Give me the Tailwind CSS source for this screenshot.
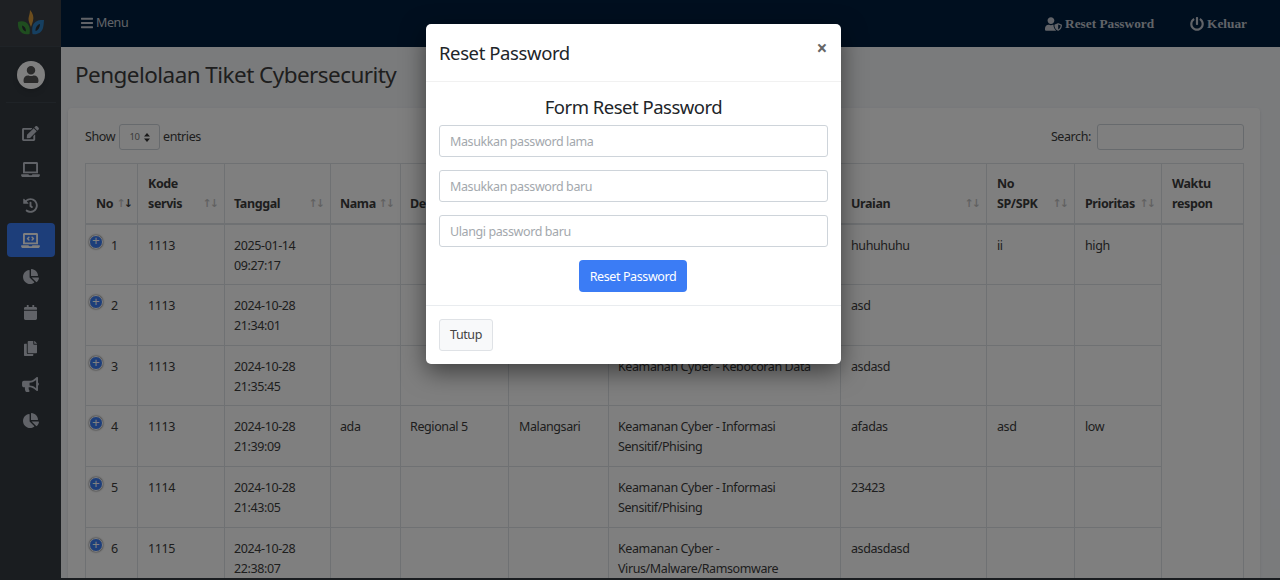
<!DOCTYPE html>
<html lang="id">
<head>
<meta charset="utf-8">
<title>Pengelolaan Tiket Cybersecurity</title>
<script src="https://cdn.jsdelivr.net/npm/@tailwindcss/browser@4"></script>
</head>
<body class="h-[580px] overflow-hidden font-['Noto_Sans',sans-serif] text-[12.5px] tracking-[-0.4px] text-[#3d3d3d]">
<div class="relative flex h-[580px] overflow-hidden">
  <aside class="flex w-[61px] shrink-0 flex-col items-center bg-[#343a40] text-[#c2c7d0]">
    <div class="flex h-[47px] w-full items-center justify-center border-b border-[#3f474e] bg-[#3c4146]">
      <svg class="h-[28px] w-[28px]" viewBox="0 0 28 28"><path d="M13 1c3 3 4 7 3 11-.5 2-1.500 4-2 6-1-3-2.500-5-2.500-8 0-3 1.500-5 1.500-9z" fill="#d99a3a"/><path d="M1 13c4-1.500 9-.5 11 4 1 2.500 1 5 .5 8-4.500 1-9-.5-10.500-5C1 18 .8 15.500 1 13z" fill="#3f9a3f"/><path d="M27 11c-4-.5-9 .5-11 5-1 2.500-1 6-.5 9 4.500 1 9-1 10.500-6 .6-2 .8-5 1-8z" fill="#2c7fc0"/><path d="M5 16.500c2.500 .5 4 3 4 6-2.500-.5-4-3-4-6zM23 15c-2.500 .5-4.500 3-4.500 7 2.500-.5 4.500-3.500 4.500-7z" fill="#2a2f33"/></svg>
    </div>
    <div class="flex h-[56px] w-[50px] items-center justify-center border-b border-[#3f474e]">
      <div class="flex h-[28px] w-[28px] items-center justify-center rounded-full bg-white shadow-md">
        <svg class="h-[17px] w-[16px] fill-[#555]" viewBox="0 0 448 512"><path d="M224 256c70.700 0 128-57.300 128-128S294.700 0 224 0 96 57.300 96 128s57.300 128 128 128zm89.600 32h-16.700c-22.200 10.200-46.900 16-72.900 16s-50.600-5.800-72.900-16h-16.700C60.200 288 0 348.200 0 422.400V464c0 26.500 21.500 48 48 48h352c26.500 0 48-21.500 48-48v-41.600c0-74.200-60.200-134.400-134.400-134.400z"/></svg>
      </div>
    </div>
    <nav class="mt-[12px] flex w-[48px] flex-col items-center">
      <div class="flex h-[36px] w-full items-center justify-center"><svg class="h-[15px] w-[17px] fill-current" viewBox="0 0 576 512"><path d="M402.600 83.200l90.200 90.200c3.800 3.800 3.800 10 0 13.800L274.400 405.600l-92.800 10.300c-12.400 1.400-22.900-9.100-21.500-21.500l10.300-92.800L388.800 83.200c3.800-3.800 10-3.800 13.800 0zm162-22.900l-48.800-48.800c-15.200-15.200-39.900-15.200-55.200 0l-35.400 35.400c-3.800 3.800-3.800 10 0 13.800l90.200 90.200c3.800 3.800 10 3.800 13.800 0l35.400-35.400c15.200-15.300 15.200-40 0-55.200zM384 346.200V448H64V128h229.800c3.200 0 6.200-1.300 8.500-3.500l40-40c7.600-7.600 2.200-20.500-8.500-20.500H48C21.500 64 0 85.500 0 112v352c0 26.500 21.500 48 48 48h352c26.500 0 48-21.500 48-48V306.200c0-10.700-12.900-16-20.500-8.500l-40 40c-2.200 2.300-3.500 5.300-3.500 8.500z"/></svg></div>
      <div class="flex h-[36px] w-full items-center justify-center"><svg class="h-[15px] w-[19px] fill-current" viewBox="0 0 640 512"><path d="M624 416H381.540c-.74 19.810-14.710 32-32.740 32H288c-18.690 0-33.020-17.470-32.770-32H16c-8.800 0-16 7.200-16 16v16c0 35.200 28.800 64 64 64h512c35.200 0 64-28.800 64-64v-16c0-8.800-7.200-16-16-16zM576 48c0-26.400-21.600-48-48-48H112C85.600 0 64 21.600 64 48v336h512V48zm-64 272H128V64h384v256z"/></svg></div>
      <div class="flex h-[36px] w-full items-center justify-center"><svg class="h-[15px] w-[15px] fill-current" viewBox="0 0 512 512"><path d="M504 255.531c.253 136.640-111.180 248.372-247.820 248.468-59.015.042-113.223-20.530-155.822-54.911-11.077-8.940-11.905-25.541-1.839-35.607l11.267-11.267c8.609-8.609 22.353-9.551 31.891-1.984C173.062 425.135 212.781 440 256 440c101.705 0 184-82.311 184-184 0-101.705-82.311-184-184-184-48.814 0-93.149 18.969-126.068 49.932l50.754 50.754c10.080 10.080 2.941 27.314-11.313 27.314H24c-8.837 0-16-7.163-16-16V38.627c0-14.254 17.234-21.393 27.314-11.314l49.372 49.372C129.209 34.136 189.552 8 256 8c136.810 0 247.747 110.780 248 247.531zm-180.912 78.784l9.823-12.630c8.138-10.463 6.253-25.542-4.210-33.679L288 256.349V152c0-13.255-10.745-24-24-24h-16c-13.255 0-24 10.745-24 24v135.651l65.409 50.874c10.463 8.137 25.541 6.253 33.679-4.210z"/></svg></div>
      <div class="flex h-[34px] w-full items-center justify-center rounded bg-[#3b7cf5] text-white"><svg class="h-[15px] w-[19px] fill-current" viewBox="0 0 640 512"><path d="M255.030 261.650c6.250 6.250 16.380 6.250 22.630 0l11.310-11.310c6.250-6.250 6.250-16.380 0-22.630L253.250 192l35.710-35.720c6.250-6.250 6.250-16.380 0-22.630l-11.310-11.310c-6.250-6.250-16.380-6.250-22.630 0l-58.340 58.340c-6.250 6.250-6.250 16.380 0 22.630l58.350 58.340zm96.010-11.300l11.310 11.310c6.250 6.250 16.380 6.250 22.630 0l58.340-58.340c6.250-6.250 6.250-16.380 0-22.630l-58.340-58.340c-6.250-6.250-16.380-6.250-22.630 0l-11.310 11.310c-6.250 6.250-6.250 16.380 0 22.630L386.750 192l-35.710 35.720c-6.250 6.250-6.250 16.380 0 22.630zM624 416H381.540c-.74 19.810-14.710 32-32.740 32H288c-18.690 0-33.020-17.470-32.770-32H16c-8.800 0-16 7.200-16 16v16c0 35.200 28.800 64 64 64h512c35.200 0 64-28.800 64-64v-16c0-8.800-7.200-16-16-16zM576 48c0-26.400-21.600-48-48-48H112C85.600 0 64 21.600 64 48v336h512V48zm-64 272H128V64h384v256z"/></svg></div>
      <div class="mt-[1px] flex h-[36px] w-full items-center justify-center"><svg class="h-[15px] w-[16px] fill-current" viewBox="0 0 544 512"><path d="M527.790 288H290.500l158.030 158.030c6.040 6.040 15.980 6.530 22.190.68 38.700-36.460 65.320-85.610 73.130-140.860 1.340-9.460-6.510-17.850-16.060-17.850zm-15.830-64.800C503.720 103.740 408.260 8.280 288.800.04 279.680-.59 272 7.100 272 16.240V240h223.770c9.140 0 16.820-7.680 16.190-16.800zM224 288V50.710c0-9.550-8.390-17.400-17.840-16.060C86.990 51.490-4.100 155.600.14 280.370 4.500 408.510 114.830 513.590 243.030 511.980c50.400-.63 96.970-16.870 135.260-44.030 7.900-5.600 8.420-17.230 1.570-24.080L224 288z"/></svg></div>
      <div class="flex h-[36px] w-full items-center justify-center"><svg class="h-[15px] w-[13px] fill-current" viewBox="0 0 448 512"><path d="M12 192h424c6.600 0 12 5.400 12 12v260c0 26.500-21.500 48-48 48H48c-26.500 0-48-21.500-48-48V204c0-6.600 5.400-12 12-12zm436-44v-36c0-26.500-21.500-48-48-48h-48V12c0-6.600-5.400-12-12-12h-40c-6.600 0-12 5.400-12 12v52H160V12c0-6.600-5.400-12-12-12h-40c-6.600 0-12 5.400-12 12v52H48C21.500 64 0 85.500 0 112v36c0 6.600 5.400 12 12 12h424c6.600 0 12-5.400 12-12z"/></svg></div>
      <div class="flex h-[36px] w-full items-center justify-center"><svg class="h-[15px] w-[13px] fill-current" viewBox="0 0 448 512"><path d="M320 448v40c0 13.255-10.745 24-24 24H24c-13.255 0-24-10.745-24-24V120c0-13.255 10.745-24 24-24h72v296c0 30.879 25.121 56 56 56h168zm0-344V0H152c-13.255 0-24 10.745-24 24v368c0 13.255 10.745 24 24 24h272c13.255 0 24-10.745 24-24V128H344c-13.200 0-24-10.800-24-24zm120.971-31.029L375.029 7.029A24 24 0 0 0 358.059 0H352v96h96v-6.059a24 24 0 0 0-7.029-16.970z"/></svg></div>
      <div class="flex h-[36px] w-full items-center justify-center"><svg class="h-[15px] w-[17px] fill-current" viewBox="0 0 576 512"><path d="M576 240c0-23.630-12.950-44.040-32-55.120V32.010C544 23.260 537.020 0 512 0c-7.120 0-14.190 2.380-19.980 7.020l-85.030 68.030C364.280 109.190 310.660 128 256 128H64c-35.350 0-64 28.650-64 64v96c0 35.350 28.650 64 64 64h33.700c-1.390 10.480-2.180 21.140-2.180 32 0 39.770 9.260 77.350 25.560 110.940 5.190 10.690 16.520 17.060 28.400 17.060h74.280c26.050 0 41.690-29.840 25.900-50.560-16.400-21.520-26.150-48.360-26.150-77.440 0-11.110 1.620-21.790 4.410-32H256c54.660 0 108.280 18.810 150.980 52.950l85.030 68.030a32.023 32.023 0 0 0 19.980 7.020c24.920 0 32-22.780 32-32V295.130C563.050 284.040 576 263.630 576 240zm-96 141.420l-33.050-26.440C392.950 311.780 325.120 288 256 288v-96c69.120 0 136.950-23.780 190.950-66.980L480 98.580v282.840z"/></svg></div>
      <div class="flex h-[36px] w-full items-center justify-center"><svg class="h-[15px] w-[16px] fill-current" viewBox="0 0 544 512"><path d="M527.790 288H290.500l158.030 158.030c6.040 6.040 15.980 6.530 22.190.68 38.700-36.460 65.320-85.610 73.130-140.860 1.340-9.460-6.510-17.850-16.060-17.850zm-15.830-64.800C503.720 103.740 408.260 8.280 288.800.04 279.680-.59 272 7.100 272 16.240V240h223.770c9.140 0 16.820-7.680 16.190-16.800zM224 288V50.710c0-9.550-8.390-17.400-17.840-16.060C86.990 51.490-4.100 155.600.14 280.370 4.500 408.510 114.830 513.590 243.030 511.980c50.400-.63 96.970-16.870 135.260-44.030 7.900-5.600 8.420-17.230 1.570-24.080L224 288z"/></svg></div>
    </nav>
  </aside>

  <div class="flex min-w-0 flex-1 flex-col">
    <header class="flex h-[47px] shrink-0 items-center bg-[#001f3f] pl-[20px] text-[#c2c7d0]">
      <div class="-mt-[1px] flex items-center gap-[3px]">
        <svg class="h-[14px] w-[12px] fill-current" viewBox="0 0 448 512"><path d="M16 132h416c8.837 0 16-7.163 16-16V76c0-8.837-7.163-16-16-16H16C7.163 60 0 67.163 0 76v40c0 8.837 7.163 16 16 16zm0 160h416c8.837 0 16-7.163 16-16v-40c0-8.837-7.163-16-16-16H16c-8.837 0-16 7.163-16 16v40c0 8.837 7.163 16 16 16zm0 160h416c8.837 0 16-7.163 16-16v-40c0-8.837-7.163-16-16-16H16c-8.837 0-16 7.163-16 16v40c0 8.837 7.163 16 16 16z"/></svg>
        <span>Menu</span>
      </div>
      <div class="ml-auto flex items-center font-['Liberation_Serif',serif] text-[13.3px] font-bold tracking-normal">
        <div class="flex items-center gap-[3px]">
          <svg class="h-[14px] w-[17px] fill-current" viewBox="0 0 640 512"><path d="M622.300 271.100l-115.200-45c-4.100-1.600-12.600-3.700-22.200 0l-115.200 45c-10.700 4.200-17.700 14-17.700 24.900 0 111.600 68.700 188.800 132.900 213.900 9.600 3.700 18 1.600 22.200 0C558.400 489.900 640 420.500 640 296c0-10.900-7-20.700-17.700-24.900zM496 462.400V273.300l95.500 37.300c-5.600 87.100-60.900 135.400-95.500 151.800zM224 256c70.700 0 128-57.300 128-128S294.700 0 224 0 96 57.300 96 128s57.300 128 128 128zm96 40c0-2.500.8-4.800 1.100-7.200-2.500-.1-4.900-.8-7.500-.8h-16.700c-22.200 10.200-46.900 16-72.900 16s-50.600-5.800-72.900-16h-16.700C60.200 288 0 348.200 0 422.400V464c0 26.500 21.500 48 48 48h352c6.800 0 13.300-1.500 19.200-4-54-42.900-99.200-116.700-99.200-212z"/></svg>
          <span>Reset Password</span>
        </div>
        <div class="ml-[36px] mr-[33px] flex items-center gap-[3px]">
          <svg class="h-[14px] w-[14px] fill-current" viewBox="0 0 512 512"><path d="M400 54.100c63 45 104 118.600 104 201.900 0 136.800-110.800 247.700-247.500 248C120 504.300 8.200 393 8 256.400 7.900 173.100 48.900 99.300 111.800 54.200c11.700-8.300 28-4.800 35 7.700L162.600 90c5.900 10.500 3.100 23.800-6.600 31-41.500 30.800-68 79.600-68 134.900-.1 92.300 74.500 168.100 168 168.100 91.600 0 168.600-74.200 168-169.100-.3-51.800-24.700-101.800-68.100-134-9.700-7.200-12.400-20.500-6.500-30.900l15.800-28.100c7-12.400 23.200-16.100 34.800-7.900zM296 264V24c0-13.300-10.700-24-24-24h-32c-13.300 0-24 10.700-24 24v240c0 13.300 10.700 24 24 24h32c13.300 0 24-10.700 24-24z"/></svg>
          <span>Keluar</span>
        </div>
      </div>
    </header>

    <main class="min-h-0 flex-1 overflow-hidden bg-[#f4f6f9] pl-[7px] pr-[20px]">
      <h1 class="ml-[7px] flex h-[61px] items-center pb-[6px] text-[22.5px] tracking-[-0.55px] text-[#3d3d3d]">Pengelolaan Tiket Cybersecurity</h1>
      <section class="rounded-t-[4px] bg-white pl-[17px] pr-[16px] pt-[16px] shadow-sm">
        <div class="flex h-[39px] items-start justify-between">
          <div class="flex items-center">
            <span class="w-[34px]">Show</span>
            <div class="flex h-[26px] w-[41px] items-center justify-center gap-[4px] rounded-[3px] border border-[#ced4da] text-[9.5px] text-[#777]">
              <span>10</span>
              <svg class="h-[9px] w-[6px] fill-[#333]" viewBox="0 0 6 9"><path d="M3 0l3 3.500H0zM3 9L0 5.500h6z"/></svg>
            </div>
            <span class="ml-[3px]">entries</span>
          </div>
          <div class="flex items-center gap-[6px]">
            <span>Search:</span>
            <div class="h-[26px] w-[147px] rounded-[3px] border border-[#ced4da]"></div>
          </div>
        </div>
        <table class="w-[1158px] table-fixed border-collapse border border-[#dee2e6] text-left leading-[20px]">
          <colgroup>
            <col class="w-[52px]"><col class="w-[87px]"><col class="w-[106px]"><col class="w-[70px]"><col class="w-[108px]"><col class="w-[100px]"><col class="w-[232px]"><col class="w-[146px]"><col class="w-[88px]"><col class="w-[87px]"><col class="w-[82px]">
          </colgroup>
          <thead class="font-bold">
            <tr class="h-[60px] border-b-2 border-[#dee2e6] align-bottom">
              <th class="border-r border-[#dee2e6] pb-[9px] pl-[10px] pr-[6px]"><div class="flex items-center justify-between"><span>No</span><span class="self-end font-['DejaVu_Sans',sans-serif] text-[11px] tracking-[-2px]"><span class="opacity-30">↑</span>↓</span></div></th>
              <th class="border-r border-[#dee2e6] pb-[9px] pl-[10px] pr-[7px]"><div class="flex items-end justify-between"><span>Kode<br>servis</span><span class="font-['DejaVu_Sans',sans-serif] text-[11px] tracking-[-2px] opacity-30">↑↓</span></div></th>
              <th class="border-r border-[#dee2e6] pb-[9px] pl-[9px] pr-[7px]"><div class="flex items-end justify-between"><span>Tanggal</span><span class="font-['DejaVu_Sans',sans-serif] text-[11px] tracking-[-2px] opacity-30">↑↓</span></div></th>
              <th class="border-r border-[#dee2e6] pb-[9px] pl-[9px] pr-[7px]"><div class="flex items-end justify-between"><span>Nama</span><span class="font-['DejaVu_Sans',sans-serif] text-[11px] tracking-[-2px] opacity-30">↑↓</span></div></th>
              <th class="border-r border-[#dee2e6] pb-[9px] pl-[9px] pr-[7px]"><span>Departemen</span></th>
              <th class="border-r border-[#dee2e6]"></th>
              <th class="border-r border-[#dee2e6]"></th>
              <th class="border-r border-[#dee2e6] pb-[9px] pl-[10px] pr-[7px]"><div class="flex items-end justify-between"><span>Uraian</span><span class="font-['DejaVu_Sans',sans-serif] text-[11px] tracking-[-2px] opacity-30">↑↓</span></div></th>
              <th class="border-r border-[#dee2e6] pb-[9px] pl-[10px] pr-[7px]"><div class="flex items-end justify-between"><span>No<br>SP/SPK</span><span class="font-['DejaVu_Sans',sans-serif] text-[11px] tracking-[-2px] opacity-30">↑↓</span></div></th>
              <th class="border-r border-[#dee2e6] pb-[9px] pl-[10px] pr-[7px]"><div class="flex items-end justify-between"><span>Prioritas</span><span class="font-['DejaVu_Sans',sans-serif] text-[11px] tracking-[-2px] opacity-30">↑↓</span></div></th>
              <th class="pb-[9px] pl-[10px] pr-[6px]"><span>Waktu<br>respon</span></th>
            </tr>
          </thead>
          <tbody class="align-top">
            <tr class="h-[61px] border-b border-[#dee2e6]">
              <td class="border-r border-[#dee2e6] pl-[3px] pt-[11px]"><div class="flex gap-[8px]"><span class="-mt-[1px] box-content flex h-[12px] w-[12px] items-center justify-center rounded-full border-[1.5px] border-white bg-[#3b7cf5] font-['Liberation_Mono',monospace] text-[13px] leading-none tracking-normal text-white shadow-[0_0_2px_#444]">+</span><span>1</span></div></td>
              <td class="border-r border-[#dee2e6] pl-[10px] pt-[11px]">1113</td>
              <td class="border-r border-[#dee2e6] pl-[9px] pt-[11px]">2025-01-14<br>09:27:17</td>
              <td class="border-r border-[#dee2e6] pl-[9px] pt-[11px]"></td>
              <td class="border-r border-[#dee2e6] pl-[9px] pt-[11px]"></td>
              <td class="border-r border-[#dee2e6] pl-[9px] pt-[11px]"></td>
              <td class="border-r border-[#dee2e6] pl-[9px] pt-[11px]"></td>
              <td class="border-r border-[#dee2e6] pl-[10px] pt-[11px]">huhuhuhu</td>
              <td class="border-r border-[#dee2e6] pl-[10px] pt-[11px]">ii</td>
              <td class="border-r border-[#dee2e6] pl-[10px] pt-[11px]">high</td>
              <td rowspan="6"></td>
            </tr>
            <tr class="h-[61px] border-b border-[#dee2e6]">
              <td class="border-r border-[#dee2e6] pl-[3px] pt-[11px]"><div class="flex gap-[8px]"><span class="-mt-[1px] box-content flex h-[12px] w-[12px] items-center justify-center rounded-full border-[1.5px] border-white bg-[#3b7cf5] font-['Liberation_Mono',monospace] text-[13px] leading-none tracking-normal text-white shadow-[0_0_2px_#444]">+</span><span>2</span></div></td>
              <td class="border-r border-[#dee2e6] pl-[10px] pt-[11px]">1113</td>
              <td class="border-r border-[#dee2e6] pl-[9px] pt-[11px]">2024-10-28<br>21:34:01</td>
              <td class="border-r border-[#dee2e6] pl-[9px] pt-[11px]"></td>
              <td class="border-r border-[#dee2e6] pl-[9px] pt-[11px]"></td>
              <td class="border-r border-[#dee2e6] pl-[9px] pt-[11px]"></td>
              <td class="border-r border-[#dee2e6] pl-[9px] pt-[11px]"></td>
              <td class="border-r border-[#dee2e6] pl-[10px] pt-[11px]">asd</td>
              <td class="border-r border-[#dee2e6] pl-[10px] pt-[11px]"></td>
              <td class="border-r border-[#dee2e6] pl-[10px] pt-[11px]"></td>
            </tr>
            <tr class="h-[60px] border-b border-[#dee2e6]">
              <td class="border-r border-[#dee2e6] pl-[3px] pt-[11px]"><div class="flex gap-[8px]"><span class="-mt-[1px] box-content flex h-[12px] w-[12px] items-center justify-center rounded-full border-[1.5px] border-white bg-[#3b7cf5] font-['Liberation_Mono',monospace] text-[13px] leading-none tracking-normal text-white shadow-[0_0_2px_#444]">+</span><span>3</span></div></td>
              <td class="border-r border-[#dee2e6] pl-[10px] pt-[11px]">1113</td>
              <td class="border-r border-[#dee2e6] pl-[9px] pt-[11px]">2024-10-28<br>21:35:45</td>
              <td class="border-r border-[#dee2e6] pl-[9px] pt-[11px]"></td>
              <td class="border-r border-[#dee2e6] pl-[9px] pt-[11px]"></td>
              <td class="border-r border-[#dee2e6] pl-[9px] pt-[11px]"></td>
              <td class="border-r border-[#dee2e6] pl-[9px] pt-[11px]">Keamanan Cyber - Kebocoran Data</td>
              <td class="border-r border-[#dee2e6] pl-[10px] pt-[11px]">asdasd</td>
              <td class="border-r border-[#dee2e6] pl-[10px] pt-[11px]"></td>
              <td class="border-r border-[#dee2e6] pl-[10px] pt-[11px]"></td>
            </tr>
            <tr class="h-[61px] border-b border-[#dee2e6]">
              <td class="border-r border-[#dee2e6] pl-[3px] pt-[11px]"><div class="flex gap-[8px]"><span class="-mt-[1px] box-content flex h-[12px] w-[12px] items-center justify-center rounded-full border-[1.5px] border-white bg-[#3b7cf5] font-['Liberation_Mono',monospace] text-[13px] leading-none tracking-normal text-white shadow-[0_0_2px_#444]">+</span><span>4</span></div></td>
              <td class="border-r border-[#dee2e6] pl-[10px] pt-[11px]">1113</td>
              <td class="border-r border-[#dee2e6] pl-[9px] pt-[11px]">2024-10-28<br>21:39:09</td>
              <td class="border-r border-[#dee2e6] pl-[9px] pt-[11px]">ada</td>
              <td class="border-r border-[#dee2e6] pl-[9px] pt-[11px]">Regional 5</td>
              <td class="border-r border-[#dee2e6] pl-[10px] pt-[11px]">Malangsari</td>
              <td class="border-r border-[#dee2e6] pl-[9px] pt-[11px]">Keamanan Cyber - Informasi<br>Sensitif/Phising</td>
              <td class="border-r border-[#dee2e6] pl-[10px] pt-[11px]">afadas</td>
              <td class="border-r border-[#dee2e6] pl-[10px] pt-[11px]">asd</td>
              <td class="border-r border-[#dee2e6] pl-[10px] pt-[11px]">low</td>
            </tr>
            <tr class="h-[61px] border-b border-[#dee2e6]">
              <td class="border-r border-[#dee2e6] pl-[3px] pt-[11px]"><div class="flex gap-[8px]"><span class="-mt-[1px] box-content flex h-[12px] w-[12px] items-center justify-center rounded-full border-[1.5px] border-white bg-[#3b7cf5] font-['Liberation_Mono',monospace] text-[13px] leading-none tracking-normal text-white shadow-[0_0_2px_#444]">+</span><span>5</span></div></td>
              <td class="border-r border-[#dee2e6] pl-[10px] pt-[11px]">1114</td>
              <td class="border-r border-[#dee2e6] pl-[9px] pt-[11px]">2024-10-28<br>21:43:05</td>
              <td class="border-r border-[#dee2e6] pl-[9px] pt-[11px]"></td>
              <td class="border-r border-[#dee2e6] pl-[9px] pt-[11px]"></td>
              <td class="border-r border-[#dee2e6] pl-[9px] pt-[11px]"></td>
              <td class="border-r border-[#dee2e6] pl-[9px] pt-[11px]">Keamanan Cyber - Informasi<br>Sensitif/Phising</td>
              <td class="border-r border-[#dee2e6] pl-[10px] pt-[11px]">23423</td>
              <td class="border-r border-[#dee2e6] pl-[10px] pt-[11px]"></td>
              <td class="border-r border-[#dee2e6] pl-[10px] pt-[11px]"></td>
            </tr>
            <tr class="h-[61px] border-b border-[#dee2e6]">
              <td class="border-r border-[#dee2e6] pl-[3px] pt-[11px]"><div class="flex gap-[8px]"><span class="-mt-[1px] box-content flex h-[12px] w-[12px] items-center justify-center rounded-full border-[1.5px] border-white bg-[#3b7cf5] font-['Liberation_Mono',monospace] text-[13px] leading-none tracking-normal text-white shadow-[0_0_2px_#444]">+</span><span>6</span></div></td>
              <td class="border-r border-[#dee2e6] pl-[10px] pt-[11px]">1115</td>
              <td class="border-r border-[#dee2e6] pl-[9px] pt-[11px]">2024-10-28<br>22:38:07</td>
              <td class="border-r border-[#dee2e6] pl-[9px] pt-[11px]"></td>
              <td class="border-r border-[#dee2e6] pl-[9px] pt-[11px]"></td>
              <td class="border-r border-[#dee2e6] pl-[9px] pt-[11px]"></td>
              <td class="border-r border-[#dee2e6] pl-[9px] pt-[11px]">Keamanan Cyber -<br>Virus/Malware/Ramsomware</td>
              <td class="border-r border-[#dee2e6] pl-[10px] pt-[11px]">asdasdasd</td>
              <td class="border-r border-[#dee2e6] pl-[10px] pt-[11px]"></td>
              <td class="border-r border-[#dee2e6] pl-[10px] pt-[11px]"></td>
            </tr>
          </tbody>
        </table>
      </section>
    </main>
    <div class="h-[2px] shrink-0 bg-[#343a40]"></div>
  </div>

  <div class="absolute inset-0 bg-black/50"></div>

  <div class="absolute left-[426px] top-[24px] flex h-[340px] w-[415px] flex-col rounded-[5px] bg-white text-[#212529] shadow-[0_8px_24px_rgba(0,0,0,0.5)]">
    <div class="flex h-[58px] shrink-0 items-center justify-between border-b border-[#f1f1f1] pl-[13px] pr-[14px]">
      <h2 class="text-[18.5px] tracking-[-0.4px]">Reset Password</h2>
      <span class="-mt-[9px] text-[19px] font-bold leading-none text-[#666]">×</span>
    </div>
    <form class="flex flex-col border-b border-[#e9ecef] px-[13px] pb-[13px]">
      <h3 class="flex h-[43px] items-center justify-center pt-[7px] text-[18.5px] tracking-[-0.5px]">Form Reset Password</h3>
      <div class="flex h-[32px] items-center rounded-[3px] border border-[#ced4da] px-[10px] pt-[2px] text-[#a3a8ad]">Masukkan password lama</div>
      <div class="mt-[13px] flex h-[32px] items-center rounded-[3px] border border-[#ced4da] px-[10px] pt-[2px] text-[#a3a8ad]">Masukkan password baru</div>
      <div class="mt-[13px] flex h-[32px] items-center rounded-[3px] border border-[#ced4da] px-[10px] pt-[2px] text-[#a3a8ad]">Ulangi password baru</div>
      <button type="button" class="ml-[140px] mt-[13px] h-[32px] w-[108px] rounded-[4px] bg-[#3b7cf5] pt-[2px] text-white">Reset Password</button>
    </form>
    <div class="px-[13px] pt-[13px]">
      <button type="button" class="h-[32px] w-[54px] rounded-[3px] border border-[#dfe2e6] bg-[#f8f9fa] text-[#444]">Tutup</button>
    </div>
  </div>
</div>
</body>
</html>
